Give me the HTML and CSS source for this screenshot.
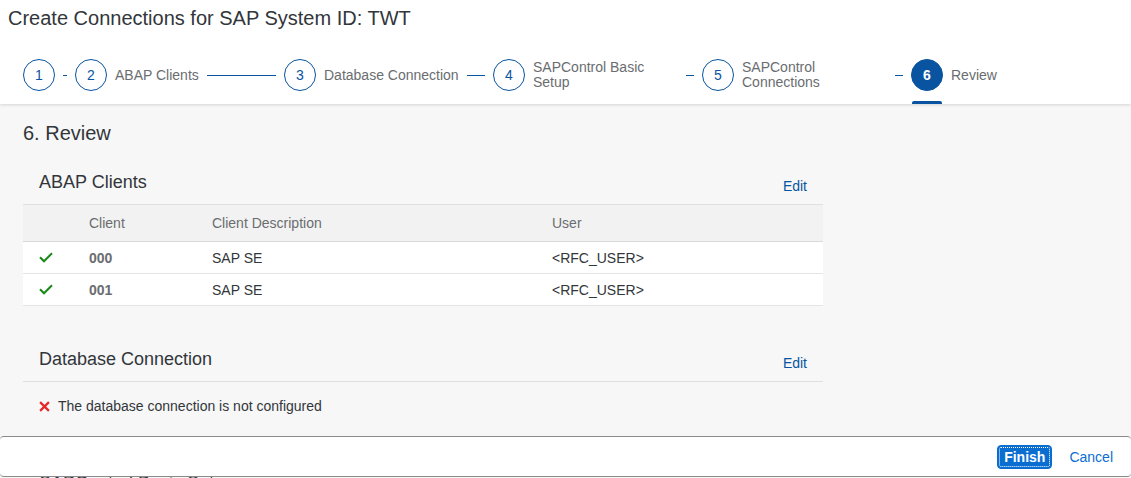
FILE: index.html
```html
<!DOCTYPE html>
<html lang="en">
<head>
<meta charset="utf-8">
<title>Create Connections</title>
<link rel="stylesheet" href="styles.css">
</head>
<body>
<div class="page">
  <header class="header">
    <h1 class="title">Create Connections for SAP System ID: TWT</h1>
    <nav class="steps">
      <div class="step step-first"><span class="circle">1</span><span class="sep"></span></div>
      <div class="step"><span class="circle">2</span><span class="label">ABAP Clients</span><span class="sep"></span></div>
      <div class="step"><span class="circle">3</span><span class="label">Database Connection</span><span class="sep"></span></div>
      <div class="step"><span class="circle">4</span><span class="label">SAPControl Basic Setup</span><span class="sep"></span></div>
      <div class="step"><span class="circle">5</span><span class="label">SAPControl Connections</span><span class="sep"></span></div>
      <div class="step step-last active"><span class="circle">6</span><span class="label">Review</span></div>
    </nav>
  </header>

  <main class="content">
    <h2 class="review-title">6. Review</h2>

    <section class="section">
      <div class="section-head">
        <h3 class="section-title">ABAP Clients</h3>
        <a class="edit">Edit</a>
      </div>
      <div class="table">
        <div class="row head-row">
          <div class="cell"></div>
          <div class="cell">Client</div>
          <div class="cell">Client Description</div>
          <div class="cell">User</div>
        </div>
        <div class="row">
          <div class="cell"><svg class="check" viewBox="0 0 14 11" width="14" height="11"><polyline points="1,5.2 5,9.3 13,1.2" fill="none" stroke="#188918" stroke-width="2"/></svg></div>
          <div class="cell bold">000</div>
          <div class="cell">SAP SE</div>
          <div class="cell">&lt;RFC_USER&gt;</div>
        </div>
        <div class="row">
          <div class="cell"><svg class="check" viewBox="0 0 14 11" width="14" height="11"><polyline points="1,5.2 5,9.3 13,1.2" fill="none" stroke="#188918" stroke-width="2"/></svg></div>
          <div class="cell bold">001</div>
          <div class="cell">SAP SE</div>
          <div class="cell">&lt;RFC_USER&gt;</div>
        </div>
      </div>
    </section>

    <section class="section section-db">
      <div class="section-head">
        <h3 class="section-title">Database Connection</h3>
        <a class="edit">Edit</a>
      </div>
      <div class="message">
        <svg class="cross" viewBox="0 0 10 10" width="11" height="11"><path d="M1 1 L9 9 M9 1 L1 9" stroke="#e52929" stroke-width="2" fill="none"/></svg>
        <span>The database connection is not configured</span>
      </div>
    </section>

    <section class="section section-next">
      <div class="section-head">
        <h3 class="section-title">SAPControl Basic Setup</h3>
        <a class="edit">Edit</a>
      </div>
    </section>
  </main>

  <footer class="footer">
    <button class="btn-finish">Finish</button>
    <button class="btn-cancel">Cancel</button>
  </footer>
</div>
</body>
</html>
```

FILE: styles.css
```css
html, body {
  margin: 0;
  padding: 0;
  height: 100%;
  overflow: hidden;
}

body {
  font-family: "Liberation Sans", Arial, sans-serif;
  color: #32363a;
  background: #f7f7f7;
}

.page {
  position: relative;
  height: 478px;
  overflow: hidden;
}

.header {
  background: #ffffff;
  position: relative;
  z-index: 1;
  box-shadow: 0 1px 3px rgba(0, 0, 0, 0.14);
}

.title {
  margin: 0;
  padding-left: 8px;
  font-size: 20px;
  font-weight: normal;
  line-height: 36px;
  color: #32363a;
}

.steps {
  display: flex;
  align-items: flex-start;
  margin-top: 23px;
  padding-left: 23px;
  padding-bottom: 13px;
}

.step {
  display: flex;
  align-items: center;
  width: 209px;
  flex: none;
  height: 32px;
  position: relative;
}

.step-first {
  width: 52px;
}

.step-last {
  width: auto;
}

.circle {
  width: 30px;
  height: 30px;
  border: 1px solid #0854a0;
  border-radius: 50%;
  display: flex;
  align-items: center;
  justify-content: center;
  font-size: 14px;
  color: #0854a0;
  flex: none;
  background: #fff;
}

.active .circle {
  background: #0854a0;
  color: #fff;
  font-weight: bold;
}

.active::after {
  content: "";
  position: absolute;
  left: 1px;
  top: 42px;
  width: 30px;
  height: 3px;
  background: #0854a0;
  border-radius: 2px 2px 0 0;
}

.label {
  margin-left: 8px;
  font-size: 14px;
  line-height: 15px;
  color: #6a6d70;
  max-width: 145px;
}

.sep {
  flex: 1;
  min-width: 4px;
  height: 1px;
  margin: 0 8px;
  background: #0854a0;
}

.content {
  padding: 17px 0 0 23px;
}

.review-title {
  margin: 0;
  font-size: 20px;
  font-weight: normal;
  line-height: 24px;
  color: #32363a;
}

.section {
  width: 800px;
  margin-top: 25px;
}

.section-db {
  margin-top: 41px;
}

.section-next {
  margin-top: 40px;
}

.section-head {
  display: flex;
  justify-content: space-between;
  align-items: flex-end;
  padding: 0 16px 10px 16px;
  border-bottom: 1px solid #e0e0e0;
}

.section-title {
  margin: 0;
  font-size: 18px;
  font-weight: normal;
  line-height: 24px;
  color: #32363a;
}

.edit {
  font-size: 14px;
  line-height: 16px;
  color: #0854a0;
  cursor: pointer;
}

.table {
  background: #fff;
}

.row {
  display: grid;
  grid-template-columns: 50px 123px 340px 1fr;
  align-items: center;
  height: 31px;
  border-bottom: 1px solid #e5e5e5;
  font-size: 14px;
}

.head-row {
  height: 36px;
  background: #f2f2f2;
  border-bottom: 1px solid #d9d9d9;
  color: #6a6d70;
}

.cell {
  padding-left: 16px;
  display: flex;
  align-items: center;
}

.bold {
  font-weight: bold;
  color: #6a6d70;
}

.message {
  display: flex;
  align-items: center;
  padding: 15px 16px 16px 16px;
  font-size: 14px;
  line-height: 18px;
  color: #32363a;
}

.cross {
  margin-right: 8px;
}

.footer {
  position: absolute;
  left: 0;
  right: 0;
  bottom: 1px;
  height: 39px;
  background: #fff;
  border-top: 1px solid #8a8a8a;
  border-bottom: 1px solid #8a8a8a;
  border-radius: 4px;
  display: flex;
  justify-content: flex-end;
  align-items: center;
  padding: 0 10px;
  gap: 9px;
  z-index: 2;
}

.btn-finish {
  font-family: "Liberation Sans", Arial, sans-serif;
  font-size: 14px;
  font-weight: bold;
  color: #fff;
  background: #0a6ed1;
  border: 1px solid #0a6ed1;
  border-radius: 4px;
  height: 24px;
  padding: 0 6px;
  outline: 1px dotted #ffffff;
  outline-offset: -3px;
}

.btn-cancel {
  font-family: "Liberation Sans", Arial, sans-serif;
  font-size: 14px;
  color: #0a6ed1;
  background: transparent;
  border: none;
  height: 24px;
  padding: 0 8px;
}
```
